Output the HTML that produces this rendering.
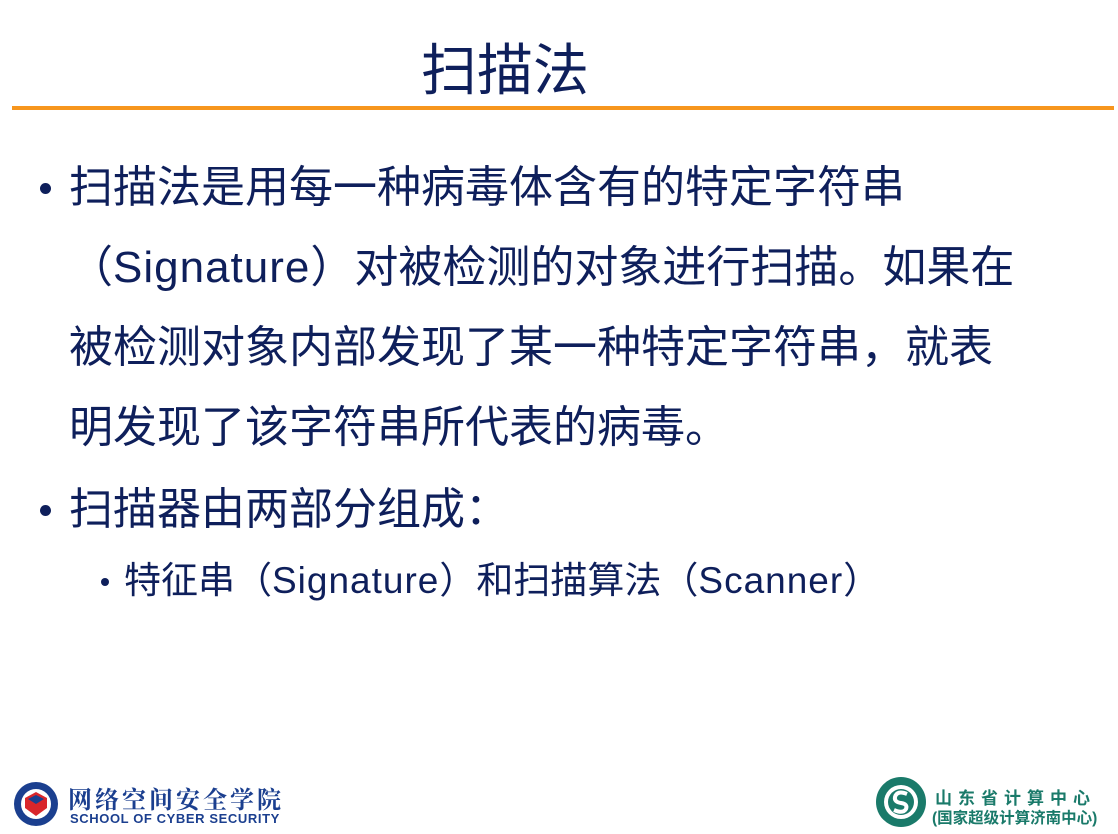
<!DOCTYPE html>
<html><head><meta charset="utf-8"><style>
body{margin:0;width:1118px;height:834px;background:#fff;position:relative;overflow:hidden;font-family:"Liberation Sans","Noto Sans CJK SC",sans-serif;color:#0e1f5b}
.a{position:absolute;white-space:nowrap}
.t{font-size:56px;left:421px;top:36px;line-height:70px}
.hr{position:absolute;left:12px;top:106px;width:1102px;height:4px;background:#f7961d}
.l{font-size:44px;line-height:60px}
.s{font-size:37px;line-height:50px}
.e{letter-spacing:1px}
.dot{position:absolute;border-radius:50%;background:#0e1f5b}
</style></head><body>
<div class="a t">扫描法</div>
<div class="hr"></div>
<div class="dot" style="left:40px;top:183px;width:11px;height:11px"></div>
<div class="a l" style="left:69px;top:158px">扫描法是用每一种病毒体含有的特定字符串</div>
<div class="a l" style="left:69px;top:238px">（<span class="e">Signature</span>）对被检测的对象进行扫描。如果在</div>
<div class="a l" style="left:69px;top:318px">被检测对象内部发现了某一种特定字符串，就表</div>
<div class="a l" style="left:69px;top:398px">明发现了该字符串所代表的病毒。</div>
<div class="dot" style="left:40px;top:505px;width:11px;height:11px"></div>
<div class="a l" style="left:69px;top:480px">扫描器由两部分组成：</div>
<div class="dot" style="left:101px;top:578px;width:8px;height:8px"></div>
<div class="a s" style="left:124px;top:556px">特征串（<span class="e">Signature</span>）和扫描算法（<span class="e">Scanner</span>）</div>
<svg class="a" style="left:12px;top:780px" width="48" height="48" viewBox="0 0 48 48"><circle cx="24" cy="24" r="22" fill="#1b3f8f"/><circle cx="24" cy="24" r="15" fill="#fff"/><path d="M13 18 L24 12 L35 18 L35 28 L24 36 L13 28Z" fill="#d9262b"/><path d="M16 19 L24 15 L32 19 L24 24Z" fill="#1b3f8f"/></svg>
<div class="a" style="left:68px;top:780px;font-size:24px;color:#1b3f8f;letter-spacing:3px;font-family:'Noto Serif CJK SC',serif;font-weight:bold">网络空间安全学院</div>
<div class="a" style="left:70px;top:811px;font-size:13px;color:#1b3f8f;letter-spacing:0.6px;font-weight:bold">SCHOOL OF CYBER SECURITY</div>
<svg class="a" style="left:875px;top:776px" width="52" height="52" viewBox="0 0 52 52"><circle cx="26" cy="26" r="25" fill="#1a7a6a"/><circle cx="26" cy="26" r="17" fill="#fff"/><circle cx="26" cy="26" r="13" fill="#1a7a6a"/><path d="M32 18 Q22 14 20 21 Q19 26 26 27 Q33 28 31 33 Q28 38 19 34" stroke="#fff" stroke-width="4" fill="none"/></svg>
<div class="a" style="left:935px;top:784px;font-size:17px;color:#1a7a6a;letter-spacing:6px;font-weight:bold">山东省计算中心</div>
<div class="a" style="left:932px;top:806px;font-size:15.5px;color:#1a7a6a;font-weight:bold">(国家超级计算济南中心)</div>
</body></html>
